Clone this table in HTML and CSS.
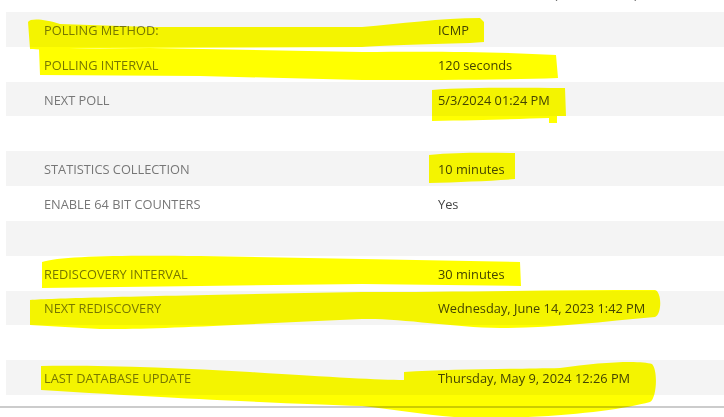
FILE: index.html
```html
<!DOCTYPE html>
<html>
<head>
<meta charset="utf-8">
<link rel="stylesheet" href="styles.css">
</head>
<body>
<div class="page">
  <div class="header"><span class="header-text">(Rescheduled)</span></div>
  <div class="list">
    <div class="row shade"><span class="label">POLLING METHOD:</span><span class="value">ICMP</span></div>
    <div class="row"><span class="label">POLLING INTERVAL</span><span class="value">120 seconds</span></div>
    <div class="row shade"><span class="label">NEXT POLL</span><span class="value">5/3/2024 01:24 PM</span></div>
    <div class="row"></div>
    <div class="row shade"><span class="label">STATISTICS COLLECTION</span><span class="value">10 minutes</span></div>
    <div class="row"><span class="label">ENABLE 64 BIT COUNTERS</span><span class="value">Yes</span></div>
    <div class="row shade"></div>
    <div class="row"><span class="label">REDISCOVERY INTERVAL</span><span class="value">30 minutes</span></div>
    <div class="row shade"><span class="label">NEXT REDISCOVERY</span><span class="value">Wednesday, June 14, 2023 1:42 PM</span></div>
    <div class="row"></div>
    <div class="row shade"><span class="label">LAST DATABASE UPDATE</span><span class="value">Thursday, May 9, 2024 12:26 PM</span></div>
  </div>
  <div class="rule"></div>
  <svg class="marker" width="724" height="417" viewBox="0 0 724 417">
    <path d="M28,22 C30,18 45,19 60,24 L150,27 L362,27 C400,24 440,18 480,18 L484,22 L484,42 L470,43 C420,44 380,46 362,47 L100,48 C70,49 40,50 30,49 Z"/>
    <path d="M39,49 L150,48 L362,52 C440,51 500,52 556,55 L558,78 C500,80 440,80 362,80 L200,76 L40,75 Z"/>
    <path d="M432,90 C470,87 520,88 565,88 L566,116 L557,116 L557,123 L549,123 L549,118 C520,119 480,120 432,121 Z"/>
    <path d="M429,155 C460,152 490,153 515,153 L515,179 C490,181 460,182 429,183 Z"/>
    <path d="M42,262 C60,256 120,255 200,256 L362,259 L520,262 L521,286 L362,284 L200,286 L42,288 Z"/>
    <path d="M30,300 C60,298 150,296 362,292 C450,292 550,290 655,290 C662,292 662,314 655,317 C600,322 550,328 500,328 C450,327 400,318 362,319 C250,324 150,330 100,329 L30,325 Z"/>
    <path d="M41,366 C100,365 180,368 250,372 C330,377 380,380 404,380 L404,372 C450,369 520,369 560,368 C600,362 640,360 652,364 C658,370 657,398 650,402 C620,410 560,418 480,418 C440,418 400,410 362,406 C300,404 200,400 41,390 Z"/>
  </svg>
</div>
</body>
</html>
```

FILE: styles.css
```css
html, body {
  margin: 0;
  padding: 0;
  background: #ffffff;
  overflow: hidden;
}

.page {
  position: relative;
  width: 724px;
  height: 417px;
  font-family: "Open Sans", "Noto Sans", sans-serif;
  font-size: 12.8px;
}

.header {
  display: flow-root;
  height: 12px;
}

.header-text {
  display: block;
  margin-top: -12.5px;
  line-height: 13px;
  padding-left: 554px;
  color: #666;
}

.list {
  margin-left: 6px;
}

.row {
  display: grid;
  grid-template-columns: 394px 1fr;
  align-items: center;
  height: 34.82px;
  padding-left: 38px;
  padding-top: 1px;
  box-sizing: border-box;
}

.row.shade {
  background: #f4f4f4;
}

.label {
  color: #777777;
}

.value {
  color: #444444;
}

.rule {
  margin-top: 11px;
  height: 2px;
  background: #cccccc;
}

.marker {
  position: absolute;
  left: 0;
  top: 0;
  pointer-events: none;
  mix-blend-mode: multiply;
  fill: #ffff00;
}
```
